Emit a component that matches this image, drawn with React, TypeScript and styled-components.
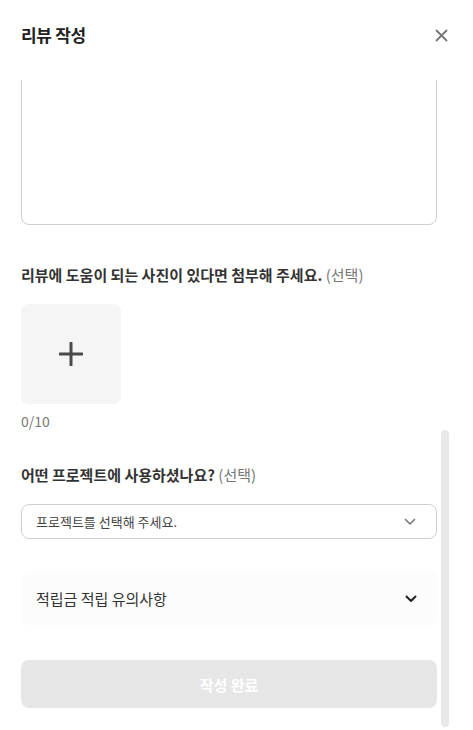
import React from "react";
import styled, { createGlobalStyle } from "styled-components";

const Global = createGlobalStyle`
  html, body { margin: 0; padding: 0; background: #fff; }
  body { font-family: "Noto Sans CJK KR", "Noto Sans", sans-serif; color: #222; }
  * { box-sizing: border-box; }
`;

const Modal = styled.div`
  width: 473px;
  height: 730px;
  display: flex;
  flex-direction: column;
  background: #fff;
  overflow: hidden;
`;

const Header = styled.header`
  height: 80px;
  flex: none;
  display: flex;
  align-items: flex-start;
  justify-content: space-between;
  padding: 24px 22px 0 21px;
`;

const Title = styled.h1`
  margin: 0;
  font-size: 17px;
  line-height: 22px;
  font-weight: 700;
  color: #222;
  letter-spacing: -0.3px;
`;

const CloseButton = styled.button`
  border: 0;
  background: none;
  padding: 0;
  width: 20px;
  height: 22px;
  display: flex;
  align-items: center;
  justify-content: center;
  color: #777;
`;

const Body = styled.div`
  position: relative;
  flex: 1;
  min-height: 0;
  overflow: hidden;
  display: flex;
  flex-direction: column;
  justify-content: flex-end;
  padding: 0 36px 22px 21px;
`;

const Thumb = styled.div`
  position: absolute;
  right: 24px;
  bottom: 3px;
  width: 8px;
  height: 297px;
  border-radius: 4px;
  background: #e8e8e8;
`;

const TextArea = styled.textarea`
  flex: none;
  display: block;
  width: 100%;
  height: 220px;
  resize: none;
  border: 1px solid #cfcfcf;
  border-radius: 8px;
  outline: none;
  font: inherit;
`;

const Section = styled.section<{ $top: number }>`
  flex: none;
  margin-top: ${(p) => p.$top}px;
  display: flex;
  flex-direction: column;
`;

const Label = styled.h2`
  margin: 0;
  font-size: 15px;
  line-height: 20px;
  font-weight: 700;
  color: #333;
`;

const Optional = styled.span`
  font-weight: 400;
  color: #777;
`;

const AddPhoto = styled.button`
  margin-top: 19px;
  width: 100px;
  height: 100px;
  border: 0;
  border-radius: 8px;
  background: #f5f5f5;
  display: flex;
  align-items: center;
  justify-content: center;
  color: #4a4a4a;
  padding: 0;
`;

const Counter = styled.div`
  margin-top: 7px;
  font-size: 14px;
  line-height: 20px;
  color: #777;
`;

const Select = styled.div`
  margin-top: 19px;
  height: 35px;
  border: 1px solid #cfcfcf;
  border-radius: 8px;
  display: flex;
  align-items: center;
  justify-content: space-between;
  padding: 0 20px 0 14px;
  font-size: 13px;
  color: #444;
`;

const Accordion = styled.div`
  flex: none;
  margin-top: 33px;
  height: 53px;
  background: #fcfcfc;
  border-radius: 6px;
  display: flex;
  align-items: center;
  justify-content: space-between;
  padding: 0 20px 0 15px;
  font-size: 15px;
  color: #333;
`;

const Submit = styled.button`
  flex: none;
  margin-top: 35px;
  width: 100%;
  height: 48px;
  border: 0;
  border-radius: 8px;
  background: #e6e6e6;
  color: #fff;
  font: inherit;
  font-size: 15px;
  font-weight: 700;
`;

const Chevron = ({ color, w }: { color: string; w: number }) => (
  <svg width="12" height="8" viewBox="0 0 12 8" fill="none">
    <polyline points="1.5,1.5 6,6 10.5,1.5" stroke={color} strokeWidth={w} strokeLinecap="round" strokeLinejoin="round" />
  </svg>
);

export default function App() {
  return (
    <>
      <Global />
      <Modal>
        <Header>
          <Title>리뷰 작성</Title>
          <CloseButton aria-label="닫기">
            <svg width="13" height="13" viewBox="0 0 13 13">
              <path d="M1.5 1.5 L11.5 11.5 M11.5 1.5 L1.5 11.5" stroke="currentColor" strokeWidth="1.8" strokeLinecap="round" />
            </svg>
          </CloseButton>
        </Header>
        <Body>
          <TextArea />
          <Section $top={40}>
            <Label>
              리뷰에 도움이 되는 사진이 있다면 첨부해 주세요. <Optional>(선택)</Optional>
            </Label>
            <AddPhoto aria-label="사진 추가">
              <svg width="24" height="24" viewBox="0 0 24 24">
                <path d="M12 1 V23 M1 12 H23" stroke="currentColor" strokeWidth="3" strokeLinecap="round" />
              </svg>
            </AddPhoto>
            <Counter>0/10</Counter>
          </Section>
          <Section $top={34}>
            <Label>
              어떤 프로젝트에 사용하셨나요? <Optional>(선택)</Optional>
            </Label>
            <Select>
              <span>프로젝트를 선택해 주세요.</span>
              <Chevron color="#777" w={1.6} />
            </Select>
          </Section>
          <Accordion>
            <span>적립금 적립 유의사항</span>
            <Chevron color="#222" w={2} />
          </Accordion>
          <Submit disabled>작성 완료</Submit>
          <Thumb />
        </Body>
      </Modal>
    </>
  );
}
